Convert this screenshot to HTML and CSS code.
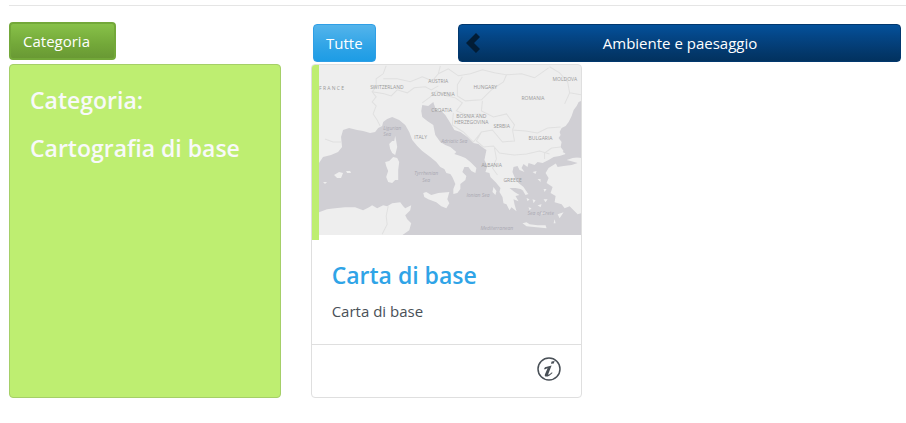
FILE: index.html
```
<!DOCTYPE html>
<html lang="it">
<head>
	<meta charset="utf-8">
	<title>Carta di base</title>
	<link rel="stylesheet" href="styles.css">
</head>
<body>
	<div class="page">
		<hr>
		<div class="toolbar">
			<div class="toolbar-left">
				<button type="button" class="btn btn-green">Categoria</button>
			</div>
			<div class="toolbar-filter">
				<button type="button" class="btn btn-light">Tutte</button>
			</div>
			<button type="button" class="btn btn-dark">
				<svg class="chevron" viewBox="0 0 14 20" aria-hidden="true"><path d="M10 0L14 4L8 10L14 16L10 20L0 10Z"/></svg>
				<span>Ambiente e paesaggio</span>
			</button>
		</div>
		<div class="cards">
			<div class="card card-category">
				<h4>Categoria:</h4>
				<h4>Cartografia di base</h4>
			</div>
			<div class="card">
				<div class="card-image">
					<svg class="map" viewBox="0 0 262 170" preserveAspectRatio="xMidYMid slice">
						<rect class="sea" width="262" height="170"/>
						<g class="land">
							<!-- europe -->
							<path d="M0 0H262V36L259 37L257 41L254 45L252 51L249 57L246 61L242 63L240 67L241 70L239 73L242 77L241 82L244 86L246 89L240 91L234 92L229 95L223 98L218 97L215 100L209 98L208 102L204 99L202 103L205 107L200 105L198 101L194 102L193 107L195 112L199 118L204 122L208 128L201 124L196 123L190 123L195 127L200 130L196 131L199 136L194 134L195 139L197 146L192 142L190 145L187 139L184 138L183 132L180 127L181 123L176 117L171 112L170 108L166 107L168 101L165 95L167 85L164 83L159 79L154 78L148 72L141 67L135 65L131 58L126 50L121 45L119 47L116 43L114 37L109 41L103 40L102 46L103 52L108 56L114 60L116 70L121 77L126 80L131 82L137 87L135 89L141 91L146 93L151 97L157 103L156 108L152 106L149 102L145 102L143 107L147 111L146 115L141 119L141 124L138 128L134 129L134 124L136 119L133 112L131 109L127 108L125 104L121 102L117 97L111 92L103 86L98 81L93 75L90 67L86 60L80 55L73 52L68 54L64 57L63 61L59 63L56 67L51 68L44 66L38 65L30 63L24 65L22 72L23 82L19 87L12 90L4 92L0 98Z"/>
							<!-- anatolia -->
							<path d="M262 92L253 93L247 95L237 98L229 103L226 108L229 113L227 118L233 122L231 128L236 131L235 137L242 139L245 143L250 141L254 145L258 149L262 148Z"/>
							<!-- africa -->
							<path d="M0 147L8 144L16 143L26 142L36 142L44 145L50 142L53 140L58 143L64 140L68 141L73 138L81 137L84 141L86 143L92 140L91 145L86 150L88 154L92 158L90 165L83 170H0Z"/>
							<!-- islands -->
							<path d="M104 128L107 127L112 130L119 128L130 127L128 134L130 138L127 143L122 141L117 137L109 134L105 132Z"/>
							<path d="M66 97L70 96L74 92L78 93L80 97L79 105L79 115L76 115L73 118L69 117L67 112L69 106L67 101Z"/>
							<path d="M76 71L77 76L78 82L76 90L73 88L71 84L70 79L73 76L75 76Z"/>
							<path d="M15 110L20 107L24 108L22 113L18 113ZM27 106L31 106L32 108L28 108ZM4 117L8 117L6 119Z"/>
							<path d="M203 158L207 157L210 159L218 160L226 160L227 163L217 162L207 161ZM238 149L244 147L240 153ZM235 154L236 158L234 158ZM174 122L177 126L176 130L173 127ZM213 107L217 106L216 109ZM218 114L221 114L221 117ZM224 124L227 124L225 127ZM203 125L206 126L209 129L206 130ZM207 133L210 134L208 136ZM213 134L216 135L214 138ZM218 140L222 139L221 142ZM224 134L228 134L226 137ZM209 142L212 143L210 145ZM222 147L225 148L222 149Z"/>
						</g>
						<path class="sea" d="M236 98L243 94L251 96L258 98L252 100L244 101L238 102ZM262 89V93L251 91L243 87L246 84Z"/>
						<path class="border" d="M67 1L64 9L57 14L57 22L53 27L57 32L53 37L57 41L54 49L58 55L61 61M53 27L65 29L72 31L78 25L88 28L95 23L106 22L112 25L119 21M64 14L78 14L91 17L103 12L113 16L119 9L121 1M119 9L129 4L139 11L151 9L163 5L175 8L187 10L184 17L172 25L162 35L146 36L138 31L138 20L143 12M163 36L162 46L174 52L187 49L195 60L193 65L206 66L218 68L228 63L241 62M103 38L111 32L117 26L127 31L136 33L143 38L137 46L147 50L161 49M134 48L133 60L144 67L154 77L162 67L173 65L183 77L195 76L193 65M162 67L157 76L164 82L174 81L180 88L195 90L207 89L220 86L230 89M175 83L177 94L173 103L178 110M225 94L225 88L232 83L241 82M230 2L240 8L248 17L250 28L245 39M187 10L202 9L215 13L229 3M250 28L262 30M6 74L14 77L22 77M69 141L67 151L68 159L63 169"/>
						<g class="labels">
							<text x="0" y="25">F R A N C E</text>
							<text x="51" y="24">SWITZERLAND</text>
							<text x="109" y="18">AUSTRIA</text>
							<text x="112" y="31">SLOVENIA</text>
							<text x="112" y="47">CROATIA</text>
							<text x="154" y="24">HUNGARY</text>
							<text x="202" y="35">ROMANIA</text>
							<text x="233" y="16">MOLDOVA</text>
							<text x="137" y="53">BOSNIA AND</text>
							<text x="135" y="59">HERZEGOVINA</text>
							<text x="174" y="63">SERBIA</text>
							<text x="209" y="75">BULGARIA</text>
							<text x="95" y="74">ITALY</text>
							<text x="162" y="102">ALBANIA</text>
							<text x="184" y="117">GREECE</text>
						</g>
						<g class="labels labels-sea">
							<text x="64" y="65">Ligurian</text>
							<text x="64" y="71">Sea</text>
							<text x="122" y="78">Adriatic Sea</text>
							<text x="95" y="110">Tyrrhenian</text>
							<text x="103" y="117">Sea</text>
							<text x="147" y="132">Ionian Sea</text>
							<text x="208" y="150">Sea of Crete</text>
							<text x="161" y="165">Mediterranean</text>
						</g>
					</svg>
				</div>
				<div class="card-body">
					<h4>Carta di base</h4>
					<p>Carta di base</p>
				</div>
				<div class="card-footer">
					<a href="#" class="info" aria-label="Informazioni">
						<svg viewBox="0 0 24 24" aria-hidden="true">
							<circle cx="12" cy="12" r="11"/>
							<path d="M14.600 4.500l3-.5-.8 2.500-2.900.2zM8 10.200l6.600-1.600-3.300 8.400c-.3.900.4.800 1.200.3l2.500-2 .5.600c-2.300 2.400-4.300 3.600-6.200 3.600-1.500 0-1.900-1-1.200-2.600l2.500-5.700c-1 .1-1.900.6-2.900 1.300l-.6-.7z"/>
						</svg>
					</a>
				</div>
			</div>
		</div>
	</div>
</body>
</html>
```
FILE: styles.css
```
* {
	box-sizing: border-box;
}
body {
	margin: 0;
	font-family: "Segoe UI", "Open Sans", sans-serif;
	font-size: 15px;
	line-height: 24px;
	color: #495057;
	background-color: #fff;
}
.page {
	padding: 5px 0 24px 9px;
}
hr {
	margin: 0 0 16px;
	border: 0;
	border-top: 1px solid #e5e5e5;
}
h4 {
	margin: 0;
	font-size: 23px;
	font-weight: 600;
	line-height: 28px;
}
p {
	margin: 0;
}
.toolbar {
	display: flex;
	align-items: flex-end;
	height: 40px;
	margin-right: 5px;
}
.toolbar-left {
	width: 304px;
	align-self: flex-start;
}
.toolbar-filter {
	width: 145px;
}
.btn {
	display: block;
	height: 38px;
	padding: 0 12px;
	border: 1px solid;
	border-radius: 4px;
	font-family: inherit;
	font-size: 15px;
	line-height: 24px;
	color: #fff;
}
.btn-green {
	padding: 0 24px 0 12px;
	border: 2px solid #73a839;
	background-image: linear-gradient(#88c149, #73a839 60%, #699934);
}
.btn-light {
	border-color: #2f9fe6;
	background-image: linear-gradient(#54b4eb, #2fa4e7 60%, #1d9ce5);
}
.btn-dark {
	display: flex;
	flex: 1;
	align-items: center;
	padding: 0 20px 0 7px;
	border-color: #02386e;
	background-image: linear-gradient(#04519b, #044687 30%, #033769 80%, #02325f);
}
.btn-dark span {
	flex: 1;
}
.chevron {
	width: 14px;
	height: 20px;
	fill: #021d36;
}
.cards {
	display: grid;
	grid-template-columns: repeat(3, 1fr);
	gap: 30px;
	margin: 2px 22px 0 0;
}
.card {
	display: flex;
	flex-direction: column;
	min-height: 334px;
	border: 1px solid #dfdfdf;
	border-radius: 4px;
	overflow: hidden;
}
.card-category {
	gap: 20px;
	padding: 21px 20px;
	border-color: #a5cf68;
	background-color: #beee71;
	color: #f8f9fa;
}
.card-image {
	height: 175px;
	border-left: 7px solid #beee71;
}
.map {
	display: block;
	width: 100%;
	height: 170px;
}
.sea {
	fill: #d0cfd4;
}
.land {
	fill: #eee;
}
.border {
	fill: none;
	stroke: #e0e0e0;
}
.labels {
	font-size: 5px;
	fill: #999;
}
.labels-sea {
	font-style: italic;
	fill: #aaa9b2;
}
.card-body {
	flex: 1;
	padding: 21px 20px;
}
.card-body h4 {
	margin-bottom: 10px;
	color: #2fa4e7;
}
.card-footer {
	display: flex;
	justify-content: flex-end;
	padding: 12px 20px 16px;
	border-top: 1px solid #dfdfdf;
}
.info {
	width: 24px;
	height: 24px;
}
.info svg {
	display: block;
	fill: #495057;
}
.info circle {
	fill: none;
	stroke: #495057;
	stroke-width: 1.5;
}
```
